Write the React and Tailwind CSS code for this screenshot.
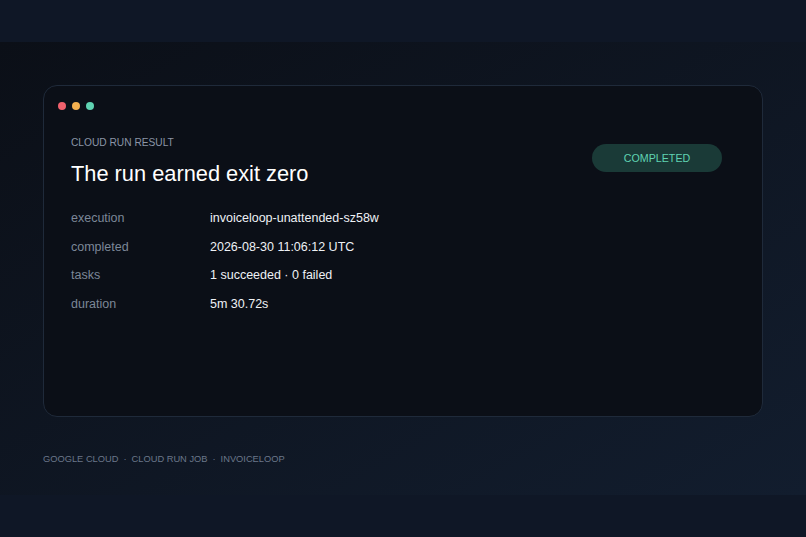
import React from "react"

const rows = [
  { label: "execution", value: "invoiceloop-unattended-sz58w" },
  { label: "completed", value: "2026-08-30 11:06:12 UTC" },
  { label: "tasks", value: "1 succeeded · 0 failed" },
  { label: "duration", value: "5m 30.72s" },
]

export default function App() {
  return (
    <div className="min-h-[537px] bg-[#0f1726] pt-[42px] font-['Liberation_Sans',Arial,sans-serif]">
      <section className="h-[453px] bg-gradient-to-br from-[#0b0f17] to-[#121d2e] px-[43px] pt-[43px]">
        {/* Result card */}
        <div className="h-[332px] rounded-[14px] border border-[#1f2a3a] bg-[#0b0f17] px-[14px] pt-[16px]">
          <div className="flex gap-[6px]">
            <span className="h-[8px] w-[8px] rounded-full bg-[#f0616d]" />
            <span className="h-[8px] w-[8px] rounded-full bg-[#f4b04f]" />
            <span className="h-[8px] w-[8px] rounded-full bg-[#5fd3b2]" />
          </div>

          <div className="flex items-start justify-between pl-[13px] pr-[26px] pt-[26px]">
            <div>
              <p className="text-[10.2px] uppercase leading-[14px] text-[#8a94a6]">Cloud run result</p>
              <h1 className="mt-[10px] text-[21.8px] leading-[28px] text-white">The run earned exit zero</h1>
            </div>
            <span className="mt-[8px] flex h-[28px] w-[130px] items-center justify-center rounded-full bg-[#1a3a37] text-[10.7px] uppercase text-[#5fd3b2]">
              Completed
            </span>
          </div>

          <dl className="mt-[22px] flex flex-col gap-[11.5px] pl-[13px] text-[12.5px] leading-[17px]">
            {rows.map((r) => (
              <div key={r.label} className="flex">
                <dt className="w-[139px] text-[#7c8798]">{r.label}</dt>
                <dd className="text-[#eef1f5]">{r.value}</dd>
              </div>
            ))}
          </dl>
        </div>

        {/* Footer breadcrumb */}
        <p className="mt-[36px] flex gap-[5px] text-[9.3px] uppercase leading-[12px] text-[#6b778a]">
          <span>Google Cloud</span>
          <span>·</span>
          <span>Cloud run job</span>
          <span>·</span>
          <span>invoiceloop</span>
        </p>
      </section>
    </div>
  )
}
